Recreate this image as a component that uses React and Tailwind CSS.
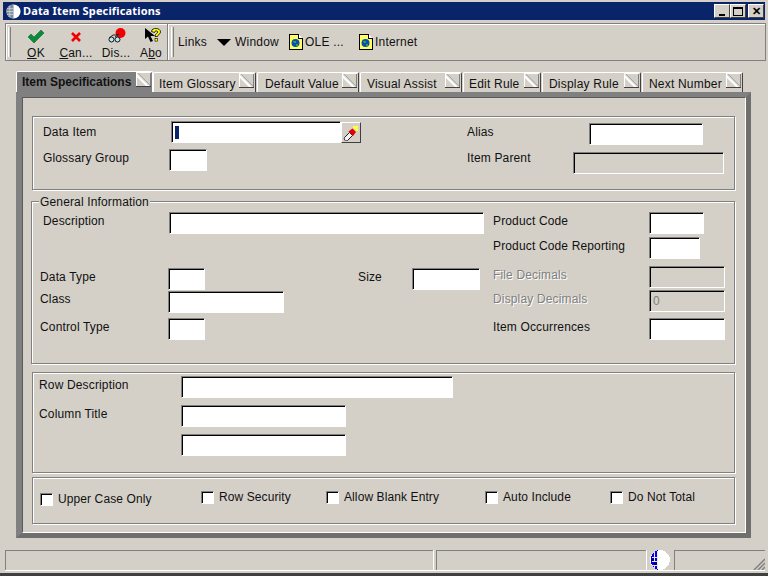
import React from 'react';

function Globe({ className }) {
  return (
    <svg className={className} viewBox="0 0 16 16">
      <circle cx="8" cy="8" r="7.500" fill="#fff" />
      <path d="M8 .5A7.500 7.500 0 0 0 8 15.500Z" fill="#7f8a9c" />
      <path d="M4 2v12M1 5h7M1 8h7M1 11h7" stroke="#c8ccd4" strokeWidth="1" fill="none" />
    </svg>
  );
}

function StatusGlobe() {
  return (
    <svg className="w-[22px] h-[20px]" viewBox="0 0 22 20" shapeRendering="crispEdges">
      <ellipse cx="11" cy="10" rx="10" ry="10" fill="#fff" />
      <path d="M9 0C4 1 2 5 2 10s2 9 7 10Z" fill="#0000e0" />
      <path d="M3 7h8M3 11h8M3 15h8M5 2v16M8 1v18M11 5v10" stroke="#fff" strokeWidth="1" fill="none" opacity="0.9" />
      <path d="M2 8h3v3H2zM5 12h3v3H5z" fill="#000080" />
    </svg>
  );
}

function OkIcon() {
  return (
    <svg className="w-[16px] h-[13px]" viewBox="0 0 16 13">
      <path d="M0 7l3-3 3 3 7-7 3 3-10 10z" fill="#0a8a3a" stroke="#056020" strokeWidth="0.5" />
    </svg>
  );
}

function CancelIcon() {
  return (
    <svg className="w-[10px] h-[10px] mb-[1px]" viewBox="0 0 10 10">
      <path d="M1 1l8 8M9 1l-8 8" stroke="#f00000" strokeWidth="2.600" />
    </svg>
  );
}

function DisplayIcon() {
  return (
    <svg className="w-[18px] h-[15px] ml-[1px]" viewBox="0 0 18 15">
      <circle cx="12.500" cy="5" r="5" fill="#f00000" />
      <path d="M1 10l4-3h3l3-1M7 9l4-3" stroke="#222" strokeWidth="1" fill="none" />
      <circle cx="3.500" cy="11.500" r="2.500" fill="#bfe6f0" stroke="#111" />
      <circle cx="9.500" cy="11.500" r="2.500" fill="#bfe6f0" stroke="#111" />
    </svg>
  );
}

function AboutIcon() {
  return (
    <svg className="w-[16px] h-[15px] ml-[3px]" viewBox="0 0 16 15">
      <path d="M0 0v11l3-2.500 2.500 5.500 2.500-1-2.500-5H10z" fill="#000" />
      <path d="M6.500 3.500C6.500 1 9 .5 11 .5s4.500 1 4.500 3.500-3 2.500-3 4.500h-2.500c0-3 2.800-3 2.800-4.500S9.500 2.500 9.500 4.500z" fill="#ffff00" stroke="#000" strokeWidth="0.800" />
      <rect x="10" y="10.500" width="2.600" height="2.600" fill="#ffff00" stroke="#000" strokeWidth="0.600" />
    </svg>
  );
}

function DocIcon() {
  return (
    <svg className="w-[14px] h-[16px]" viewBox="0 0 14 16" shapeRendering="crispEdges">
      <path d="M.5.500h9l4 4v11H.500z" fill="#ffff60" stroke="#000" />
      <path d="M9.500.500v4h4" fill="#fff" stroke="#000" />
      <circle cx="6.500" cy="9" r="4" fill="#0a4fb0" shapeRendering="auto" />
      <path d="M4 7h3v2H5zM7 10h2v2H7z" fill="#30a050" />
    </svg>
  );
}

function FlashlightIcon() {
  return (
    <svg className="w-[16px] h-[16px]" viewBox="0 0 16 16">
      <path d="M1.500 12.500l5-5 3 3-5 5c-1 .5-2 .5-2.500 0s-1-2-.5-3z" fill="#f2f2f2" stroke="#222" strokeWidth="1" />
      <path d="M5.500 6.500l4-3 3.500 3.500-3 4z" fill="#e00000" />
      <path d="M10 1h5v5h-1.500L10 2.500z" fill="#ffff40" />
    </svg>
  );
}

function Grip({ className = '' }) {
  return <div className={`w-[3px] h-[30px] border-l border-white border-r border-r-[#808080] ${className}`} />;
}

function ToolButton({ icon, label, className }) {
  return (
    <div className={`flex flex-col items-center h-[36px] ${className}`}>
      <div className="h-[16px] flex items-end justify-center mt-[3px]">{icon}</div>
      <div className="mt-[3px] text-[12px] leading-[14px] tracking-[0.2px] whitespace-nowrap">{label}</div>
    </div>
  );
}

function TabCorner() {
  return (
    <svg className="w-[15px] h-[15px] shrink-0" viewBox="0 0 15 15" shapeRendering="crispEdges">
      <rect width="15" height="15" fill="#d4d0c8" />
      <path d="M0 0h15v1H0zM0 1h1v13H0z" fill="#fff" />
      <path d="M0 14h15v1H0z" fill="#404040" />
      <path d="M14 1h1v13h-1z" fill="#808080" />
      <path d="M1 2l12 12h-3L1 5z" fill="#fff" shapeRendering="auto" />
      <path d="M2 1l12 12" stroke="#a8a8a8" strokeWidth="1" shapeRendering="auto" />
    </svg>
  );
}

function Tab({ label, className = '' }) {
  return (
    <div className={`flex items-start justify-between h-[20px] bg-[#d4d0c8] border-t border-l border-white border-r border-r-[#404040] rounded-t-[2px] pr-[1px] text-[12px] leading-[14px] tracking-[0.2px] text-[#111] ${className}`}>
      <span className="mt-[4px] whitespace-nowrap">{label}</span>
      <TabCorner />
    </div>
  );
}

function Input({ className = '', disabled, children }) {
  return (
    <div className={`shrink-0 border border-t-[#808080] border-l-[#808080] border-b-white border-r-white shadow-[inset_1px_1px_0_#000] text-[12px] leading-[20px] pl-[3px] text-[#808080] ${disabled ? 'bg-[#d4d0c8]' : 'bg-white'} ${className}`}>
      {children}
    </div>
  );
}

function Label({ className = '', disabled, children }) {
  return (
    <div className={`shrink-0 text-[12px] leading-[16px] tracking-[0.15px] whitespace-nowrap ${disabled ? 'text-[#808080] [text-shadow:1px_1px_0_#fff]' : 'text-[#111]'} ${className}`}>
      {children}
    </div>
  );
}

function Panel({ className = '', children }) {
  return (
    <div className={`relative border border-[#808080] shadow-[1px_1px_0_#fff,inset_1px_1px_0_#fff] ${className}`}>
      {children}
    </div>
  );
}

function Check({ label, className = '' }) {
  return (
    <div className={`flex items-start ${className}`}>
      <div className="w-[13px] h-[13px] shrink-0 bg-white border border-t-[#808080] border-l-[#808080] border-b-white border-r-white shadow-[inset_1px_1px_0_#000]" />
      <span className="ml-[5px] -mt-[1px] text-[12px] leading-[14px] tracking-[0.1px] text-[#111] whitespace-nowrap">{label}</span>
    </div>
  );
}

export default function App() {
  return (
    <div className="w-[768px] h-[576px] overflow-hidden bg-[#d4d0c8] pt-[2px] flex flex-col text-black font-['Liberation_Sans',Arial,sans-serif]">
      {/* title bar */}
      <div className="mx-[3px] h-[18px] bg-[#0a246a] flex items-center shrink-0">
        <Globe className="w-[15px] h-[15px] ml-[3px]" />
        <span className="ml-[2px] text-white font-bold text-[11px] tracking-[0.15px] font-['Noto_Sans',sans-serif] whitespace-nowrap">Data Item Specifications</span>
        <div className="ml-auto mr-[1px] flex">
          <div className="w-[16px] h-[14px] bg-[#d4d0c8] border border-white border-r-[#404040] border-b-[#404040] flex items-end pl-[4px] pb-[1px]"><div className="w-[6px] h-[2px] bg-black" /></div>
          <div className="w-[16px] h-[14px] bg-[#d4d0c8] border border-white border-r-[#404040] border-b-[#404040] flex items-center justify-center"><div className="w-[10px] h-[9px] border border-t-2 border-black" /></div>
          <div className="ml-[2px] w-[16px] h-[14px] bg-[#d4d0c8] border border-white border-r-[#404040] border-b-[#404040] flex items-center justify-center text-[11px] font-bold leading-none">✕</div>
        </div>
      </div>

      {/* toolbar */}
      <div className="mt-[3px] ml-[5px] mr-[2px] h-[38px] shrink-0 flex items-center border border-[#808080] shadow-[inset_1px_1px_0_#fff] text-[12px] tracking-[0.2px] text-[#111]">
        <Grip className="ml-[2px]" />
        <ToolButton icon={<OkIcon />} label={<span><u>O</u>K</span>} className="w-[40px] ml-[5px]" />
        <ToolButton icon={<CancelIcon />} label={<span><u>C</u>an...</span>} className="w-[40px]" />
        <ToolButton icon={<DisplayIcon />} label="Dis..." className="w-[36px] ml-[2px]" />
        <ToolButton icon={<AboutIcon />} label={<span>A<u>b</u>o</span>} className="w-[28px] ml-[3px]" />
        <div className="ml-[2px] w-[2px] h-[36px] border-l border-[#808080] border-r border-r-white" />
        <Grip className="ml-[2px]" />
        <span className="ml-[4px] w-[39px]">Links</span>
        <svg className="w-[14px] h-[7px]" viewBox="0 0 14 7"><path d="M0 0h14L7 7z" fill="#000" /></svg>
        <span className="ml-[4px] w-[54px]">Window</span>
        <DocIcon />
        <span className="ml-[2px] w-[54px] whitespace-nowrap">OLE ...</span>
        <DocIcon />
        <span className="ml-[2px]">Internet</span>
      </div>

      {/* tabs */}
      <div className="mt-[10px] ml-[16px] flex items-end h-[21px] shrink-0">
        <div className="flex items-start h-[21px] w-[137px] bg-[#808080] border-t border-l border-r border-white rounded-t-[2px] pl-[5px] font-bold text-[12px] leading-[14px] text-[#111]">
          <span className="w-[114px] mt-[3px] whitespace-nowrap">Item Specifications</span>
          <TabCorner />
        </div>
        <Tab label="Item Glossary" className="w-[103px] pl-[5px]" />
        <Tab label="Default Value" className="ml-[1px] w-[102px] pl-[7px]" />
        <Tab label="Visual Assist" className="ml-[1px] w-[102px] pl-[6px]" />
        <Tab label="Edit Rule" className="ml-[1px] w-[78px] pl-[5px]" />
        <Tab label="Display Rule" className="ml-[1px] w-[99px] pl-[6px]" />
        <Tab label="Next Number" className="ml-[1px] w-[101px] pl-[6px]" />
      </div>

      {/* tab body */}
      <div className="ml-[16px] w-[735px] h-[446px] shrink-0 border-[5px] border-[#808080] border-r-[#6f6f6f] border-b-[#6f6f6f] border-l-[6px]">
        <div className="h-[436px] pt-[18px] pl-[9px] border-l border-t border-l-[#5a5a5a] border-t-[#5a5a5a] border-b border-r border-b-white border-r-white">
          <Panel className="h-[74px] w-[703px] pt-[4px]">
            <div className="flex items-start h-[28px]">
              <Label className="ml-[10px] w-[128px] mt-[3px]">Data Item</Label>
              <Input className="w-[170px] h-[22px] pt-[4px]"><div className="w-[4px] h-[13px] bg-[#0a246a]" /></Input>
              <div className="w-[20px] h-[21px] mt-[1px] flex items-center justify-center border border-white border-r-[#404040] border-b-[#404040]"><FlashlightIcon /></div>
              <Label className="ml-[106px] w-[122px] mt-[3px]">Alias</Label>
              <Input className="w-[114px] h-[22px] mt-[2px]" />
            </div>
            <div className="flex items-start h-[28px]">
              <Label className="ml-[10px] w-[126px] mt-[1px]">Glossary Group</Label>
              <Input className="w-[38px] h-[22px]" />
              <Label className="ml-[260px] w-[106px] mt-[1px]">Item Parent</Label>
              <Input disabled className="w-[151px] h-[22px] mt-[3px]" />
            </div>
          </Panel>

          <Panel className="mt-[11px] -ml-[1px] h-[163px] w-[704px] pt-[10px]">
            <div className="absolute -top-[7px] left-[7px] bg-[#d4d0c8] px-[1px] text-[12px] leading-[14px] tracking-[0.15px] text-[#111]">General Information</div>
            <div className="flex items-start h-[25px]">
              <Label className="ml-[11px] w-[126px] mt-[1px]">Description</Label>
              <Input className="w-[315px] h-[22px]" />
              <Label className="ml-[9px] w-[156px] mt-[1px]">Product Code</Label>
              <Input className="w-[55px] h-[22px]" />
            </div>
            <div className="flex items-start h-[29px]">
              <Label className="ml-[461px] w-[156px] mt-[1px]">Product Code Reporting</Label>
              <Input className="w-[51px] h-[22px]" />
            </div>
            <div className="flex items-start h-[24px]">
              <Label className="ml-[8px] w-[128px] mt-[3px]">Data Type</Label>
              <Input className="w-[37px] h-[22px] mt-[2px]" />
              <Label className="ml-[153px] w-[54px] mt-[3px]">Size</Label>
              <Input className="w-[68px] h-[22px] mt-[2px]" />
              <Label disabled className="ml-[13px] w-[156px] mt-[1px]">File Decimals</Label>
              <Input disabled className="w-[76px] h-[22px]" />
            </div>
            <div className="flex items-start h-[28px]">
              <Label className="ml-[8px] w-[128px] mt-[1px]">Class</Label>
              <Input className="w-[116px] h-[22px] mt-[1px]" />
              <Label disabled className="ml-[209px] w-[156px] mt-[1px]">Display Decimals</Label>
              <Input disabled className="w-[76px] h-[22px]">0</Input>
            </div>
            <div className="flex items-start h-[24px]">
              <Label className="ml-[8px] w-[128px] mt-[1px]">Control Type</Label>
              <Input className="w-[37px] h-[22px]" />
              <Label className="ml-[288px] w-[156px] mt-[1px]">Item Occurrences</Label>
              <Input className="w-[76px] h-[22px]" />
            </div>
          </Panel>

          <Panel className="mt-[8px] h-[101px] w-[703px] pt-[3px]">
            <div className="flex items-start h-[29px]">
              <Label className="ml-[6px] w-[142px] mt-[1px]">Row Description</Label>
              <Input className="w-[272px] h-[22px]" />
            </div>
            <div className="flex items-start h-[29px]">
              <Label className="ml-[6px] w-[142px] mt-[1px]">Column Title</Label>
              <Input className="w-[165px] h-[22px]" />
            </div>
            <div className="flex items-start h-[22px]">
              <Input className="ml-[148px] w-[165px] h-[22px]" />
            </div>
          </Panel>

          <Panel className="mt-[4px] h-[47px] w-[703px]">
            <div className="flex items-start pt-[13px]">
              <Check label="Upper Case Only" className="ml-[7px] w-[161px] mt-[2px]" />
              <Check label="Row Security" className="w-[125px]" />
              <Check label="Allow Blank Entry" className="w-[159px]" />
              <Check label="Auto Include" className="w-[125px]" />
              <Check label="Do Not Total" />
            </div>
          </Panel>
        </div>
      </div>

      {/* status bar */}
      <div className="mt-[12px] ml-[5px] mr-[3px] h-[21px] shrink-0 flex border-b border-white">
        <div className="w-[428px] border-t border-l border-[#808080]" />
        <div className="w-[1px] bg-white" />
        <div className="ml-[2px] w-[210px] border-t border-l border-[#808080]" />
        <div className="w-[1px] bg-white" />
        <div className="ml-[2px] w-[23px]"><StatusGlobe /></div>
        <div className="ml-[2px] flex-1 border-t border-l border-[#808080] relative">
          <svg className="absolute right-0 bottom-0 w-[12px] h-[12px]" viewBox="0 0 12 12"><path d="M12 1L1 12M12 5L5 12M12 9L9 12" stroke="#808080" strokeWidth="1.500" /></svg>
        </div>
      </div>
      <div className="mt-[2px] h-[3px] bg-[#404040] shrink-0" />
    </div>
  );
}
